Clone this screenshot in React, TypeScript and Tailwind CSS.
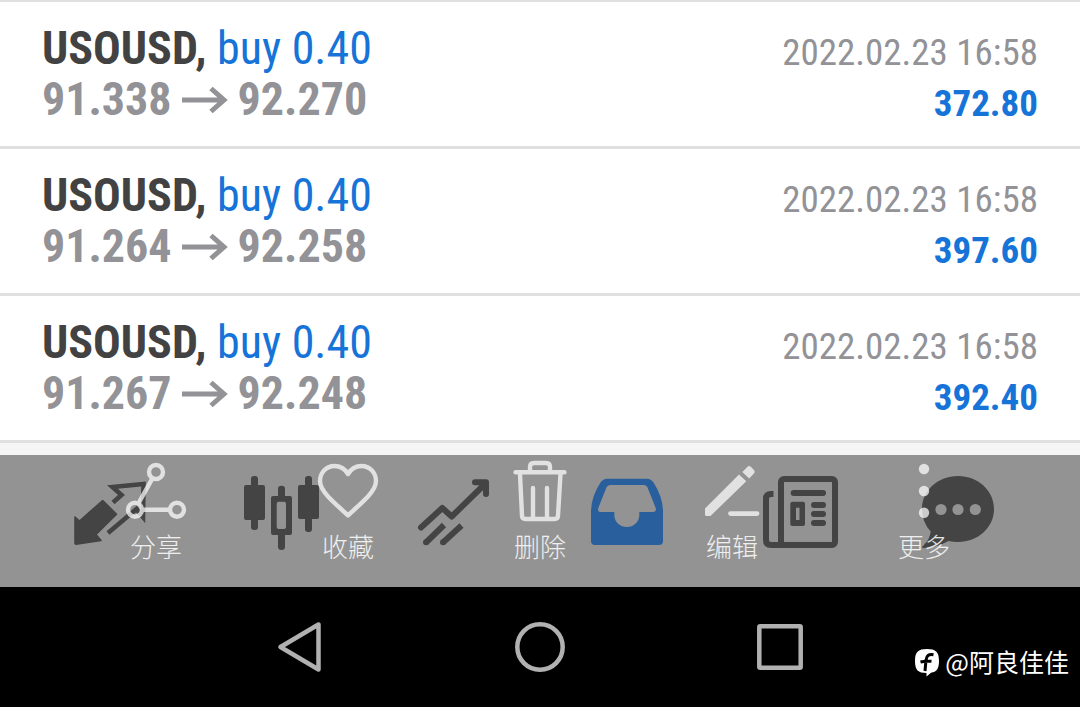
import type { ReactNode } from "react";

type Deal = { symbol: string; side: string; open: string; close: string; time: string; profit: string };

const deals: Deal[] = [
  { symbol: "USOUSD", side: "buy 0.40", open: "91.338", close: "92.270", time: "2022.02.23 16:58", profit: "372.80" },
  { symbol: "USOUSD", side: "buy 0.40", open: "91.264", close: "92.258", time: "2022.02.23 16:58", profit: "397.60" },
  { symbol: "USOUSD", side: "buy 0.40", open: "91.267", close: "92.248", time: "2022.02.23 16:58", profit: "392.40" },
];

function DealRow({ deal }: { deal: Deal }) {
  return (
    <li className="flex h-[147px] items-start justify-between border-b-[3px] border-[#e0e0e0] bg-white px-[42px] pt-[21px]">
      <div className="text-[46px] leading-[51px]">
        <p>
          <span className="font-bold text-[#424242]">{deal.symbol},</span>{" "}
          <span className="text-[#1673d8]">{deal.side}</span>
        </p>
        <p className="flex items-center gap-[10px] font-bold text-[#929297]">
          <span>{deal.open}</span>
          <svg className="h-6 w-[46px] overflow-visible" viewBox="0 0 46 24" fill="none" stroke="currentColor" strokeWidth="5" role="img" aria-label="to">
            <path d="M0 12H42M29 0.500L42 12L29 23.500" />
          </svg>
          <span>{deal.close}</span>
        </p>
      </div>
      <div className="pt-1 text-right text-[37px] leading-[51px]">
        <p className="text-[#929297]">{deal.time}</p>
        <p className="font-bold text-[#1673d8]">{deal.profit}</p>
      </div>
    </li>
  );
}

function TabButton({ label, box, className = "", children }: { label: string; box: string; className?: string; children: ReactNode }) {
  return (
    <button type="button" aria-label={label} className={`shrink-0 ${className}`}>
      <svg className="block size-[76px] overflow-visible" viewBox={box} fill="none">
        {children}
      </svg>
    </button>
  );
}

function TabBar() {
  return (
    <nav className="flex pt-[19px] pr-[84px] pl-[71px] text-[#444444]">
      <div className="flex flex-1 justify-between">
        <TabButton label="Quotes" box="71 474 76 76">
          <path d="M75 517L79.5 521L102.7 500.5L116.5 514.3L96 534.5L101 540.5L76 544.3Q75 544.3 75 543Z" fill="currentColor" stroke="currentColor" strokeWidth="1.6" strokeLinejoin="round" />
          <path d="M113 502.5L121.5 495L112.5 487L143.5 484L143 517L136.5 509L108 533" stroke="currentColor" strokeWidth="4.6" />
        </TabButton>
        <TabButton label="Charts" box="244 474 76 76">
          <g fill="currentColor">
            <rect x="244" y="485" width="21" height="35" rx="2" />
            <rect x="251" y="476" width="7" height="54" rx="3" />
            <path fillRule="evenodd" d="M273 496H290Q292 496 292 498V533Q292 535 290 535H273Q271 535 271 533V498Q271 496 273 496ZM278.7 501.7Q276.7 501.7 276.7 503.7V527Q276.7 529 278.7 529H284Q286 529 286 527V503.7Q286 501.7 284 501.7Z" />
            <path d="M278 497V489Q278 485.7 281.5 485.7T285 489V497ZM278 534V547Q278 550 281.5 550T285 547V534Z" />
            <rect x="298" y="485" width="21" height="34" rx="2" />
            <rect x="305" y="476" width="7" height="56" rx="3" />
          </g>
        </TabButton>
        <TabButton label="Trade" box="417 474 76 76">
          <g stroke="currentColor" strokeWidth="6">
            <path d="M421 527.5L442.3 508L451.7 516.5L485 484M475 482.3H486V494" strokeLinecap="round" strokeLinejoin="round" />
            <path d="M426 542.5L444 525M443 542.5L461.5 525.5" />
          </g>
          <g fill="currentColor">
            <circle cx="426" cy="542.3" r="3" />
            <circle cx="443" cy="542.3" r="3" />
            <path d="M477 482H486V493Z" />
          </g>
        </TabButton>
        <TabButton label="History" box="590 474 76 76">
          <path
            fill="#2a5f9d"
            fillRule="evenodd"
            d="M607 478.7H647Q651 478.7 653.5 482.5Q663 497 663 512V541Q663 545 659 545H595Q591 545 591 541V512Q591 497 600.5 482.5Q603 478.7 607 478.7ZM610 485Q607.5 485 606.4 487.5L598.5 507.5Q597 512 600.5 512H614.3V515A12.5 12 0 0 0 639.3 515V512H653Q657 512 655.5 507.5L647.5 487.5Q646.5 485 644 485Z"
          />
        </TabButton>
        <TabButton label="News" box="763 474 76 76">
          <g stroke="currentColor" strokeWidth="6">
            <rect x="781" y="479" width="54" height="66" rx="3" />
            <path d="M773.5 494H771Q766 494 766 499V540Q766 545 771 545H783" />
            <path d="M793.7 493H823M814 505H823M814 514H823M814 523H823" strokeLinecap="round" />
          </g>
          <path fill="currentColor" fillRule="evenodd" d="M792.3 501.7H803Q805 501.7 805 503.7V524Q805 526 803 526H792.3Q790.3 526 790.3 524V503.7Q790.3 501.7 792.3 501.7ZM796 507.7V520H799.5V507.7Z" />
        </TabButton>
      </div>
      <TabButton label="Messages" box="920 474 76 76" className="ml-[81px]">
        <path fill="currentColor" d="M958 476C978 476 994 490.5 994 509C994 527.5 978 542 958 542Q952.5 542 948.5 541Q937 547.5 923 548Q921 547.5 923.5 545.5Q930 539 930.7 531.5Q922 522 922 509C922 490.5 938 476 958 476Z" />
        <g fill="#939393">
          <circle cx="941" cy="509.5" r="5.6" />
          <circle cx="958" cy="509.5" r="5.6" />
          <circle cx="975.3" cy="509.5" r="5.6" />
        </g>
      </TabButton>
    </nav>
  );
}

function MenuItem({ label, box, children }: { label: string; box: string; children: ReactNode }) {
  return (
    <button type="button" className="flex flex-col items-center gap-[7px] text-[26px] leading-8 font-light text-white/85">
      <svg className="size-16 opacity-72" viewBox={box} fill="none" stroke="#ffffff" strokeWidth="4.4">
        {children}
      </svg>
      <span>{label}</span>
    </button>
  );
}

function ActionMenu() {
  return (
    <div className="absolute inset-0 grid grid-cols-5 items-start px-[60px] pt-1">
      <MenuItem label="分享" box="124 459 64 64">
        <circle cx="156" cy="472" r="7" />
        <circle cx="135" cy="509.7" r="7" />
        <circle cx="177" cy="509.7" r="7" />
        <path d="M152.6 478.2L138.4 503.5M142 509.7H170" />
      </MenuItem>
      <MenuItem label="收藏" box="316 459 64 64">
        <path d="M348 515.5C343 510.5 335 504 328 496.5C323 491 320 486.5 320 481C320 472.5 326.5 466 334.5 466C340.5 466 345 469 348 474C351 469 355.5 466 361.5 466C369.5 466 376 472.5 376 481C376 486.5 373 491 368 496.5C361 504 353 510.5 348 515.5Z" strokeLinejoin="round" />
      </MenuItem>
      <MenuItem label="删除" box="508 459 64 64">
        <path d="M515.5 472.3H564.5M530 471V467Q530 463 534 463H546Q550 463 550 467V471M520 474L522 515.5Q522 519 525.5 519H554.5Q558 519 558 515.5L560.5 474M533 488V519M547 488V519" strokeLinecap="round" />
      </MenuItem>
      <MenuItem label="编辑" box="700 459 64 64">
        <path fill="#ffffff" stroke="none" d="M705 508.5L739 474.5L746.3 481.3L711 515.5Q710.5 516 710 516H706.5Q705 516 705 514.5ZM742.3 472L747 467.2Q749 465 751 467L754 470Q755.5 472 753.7 473.8L749.2 478.4Z" />
        <path d="M730.5 513.6H757" strokeWidth="4.8" strokeLinecap="round" />
      </MenuItem>
      <MenuItem label="更多" box="892 459 64 64">
        <g fill="#ffffff" stroke="none">
          <circle cx="924" cy="469" r="5.2" />
          <circle cx="924" cy="491" r="5.2" />
          <circle cx="924" cy="512.7" r="5.2" />
        </g>
      </MenuItem>
    </div>
  );
}

function SystemBar() {
  return (
    <footer className="relative h-[120px] bg-black">
      <nav className="grid h-full grid-cols-3 px-[180px]">
        <button type="button" aria-label="Back" className="flex items-center justify-center">
          <svg className="size-[54px]" viewBox="273 620 54 54" fill="none" stroke="#b1b1b1" strokeWidth="4.5" strokeLinejoin="round">
            <path d="M280.5 647L318.5 624.5V669.5Z" />
          </svg>
        </button>
        <button type="button" aria-label="Home" className="flex items-center justify-center">
          <svg className="size-[54px]" viewBox="513 620 54 54" fill="none" stroke="#b1b1b1" strokeWidth="4.5">
            <circle cx="540" cy="647" r="22.7" />
          </svg>
        </button>
        <button type="button" aria-label="Recent apps" className="flex items-center justify-center">
          <svg className="size-[54px]" viewBox="753 620 54 54" fill="none" stroke="#b1b1b1" strokeWidth="4.5" strokeLinejoin="round">
            <rect x="759.3" y="626.3" width="41.4" height="41.4" rx="1" />
          </svg>
        </button>
      </nav>
      <div className="absolute right-[11px] bottom-[29px] flex items-center gap-1.5 text-[25px] leading-[34px] text-white">
        <svg className="mt-1 h-7 w-6" viewBox="0 0 24 28" role="img" aria-label="Community">
          <path fill="#ffffff" d="M12 0C21 0 24 3 24 12C24 20 21.5 23 16 23.7L11.5 27.500V24C3 24 0 21 0 12C0 3 3 0 12 0Z" />
          <path d="M18.500 5.800C13.500 4.800 11.500 7 11 11L10 22M5.500 13C9 12 13 12 16.500 12.300" fill="none" stroke="#000000" strokeWidth="3" />
        </svg>
        <span>@阿良佳佳</span>
      </div>
    </footer>
  );
}

export default function App() {
  return (
    <main className="bg-[#f5f5f5] font-['Noto_Sans_CJK_SC',sans-serif]">
      <ul className="border-t-2 border-[#e0e0e0] font-['Roboto_Condensed','Liberation_Sans_Narrow',Roboto,sans-serif] whitespace-nowrap">
        {deals.map((deal) => (
          <DealRow key={deal.open} deal={deal} />
        ))}
      </ul>
      <section className="relative mt-3 h-[132px] bg-[#939393]">
        <TabBar />
        <ActionMenu />
      </section>
      <SystemBar />
    </main>
  );
}
